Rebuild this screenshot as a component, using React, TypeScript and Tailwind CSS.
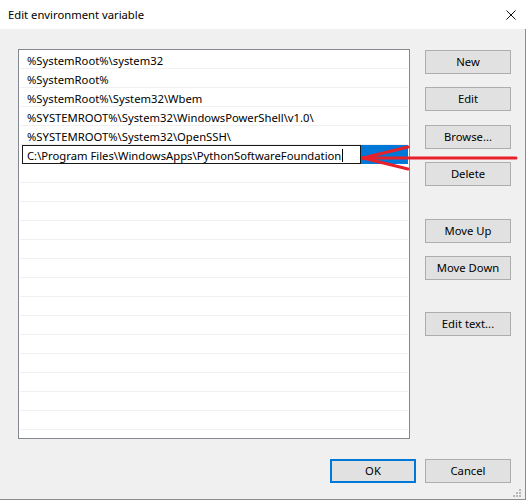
import React from "react";

const paths = [
  "%SystemRoot%\\system32",
  "%SystemRoot%",
  "%SystemRoot%\\System32\\Wbem",
  "%SYSTEMROOT%\\System32\\WindowsPowerShell\\v1.0\\",
  "%SYSTEMROOT%\\System32\\OpenSSH\\",
];

const editing = "C:\\Program Files\\WindowsApps\\PythonSoftwareFoundation";

const sideButtons = [
  { label: "New", mt: "mt-[1px]" },
  { label: "Edit", mt: "mt-[13px]" },
  { label: "Browse...", mt: "mt-[14px]" },
  { label: "Delete", mt: "mt-[13px]" },
  { label: "Move Up", mt: "mt-[33px]" },
  { label: "Move Down", mt: "mt-[13px]" },
  { label: "Edit text...", mt: "mt-[32px]" },
];

const Button: React.FC<{ label: string; className?: string }> = ({ label, className = "" }) => (
  <div
    className={`w-[86px] h-[24px] flex items-center justify-center bg-[#e1e1e1] border border-[#adadad] ${className}`}
  >
    {label}
  </div>
);

export default function App() {
  return (
    <div className="relative w-[526px] h-[500px] flex flex-col font-['Noto_Sans',sans-serif] text-[11.25px] text-black leading-none whitespace-nowrap">
      {/* title bar */}
      <div className="h-[29px] bg-white flex items-center justify-between pl-[8px] pr-[10px] shrink-0">
        <span>Edit environment variable</span>
        <svg width="10" height="10" viewBox="0 0 10 10">
          <path d="M0.5 0.5 L9.5 9.5 M9.5 0.5 L0.5 9.5" stroke="#111" strokeWidth="1" />
        </svg>
      </div>

      {/* body */}
      <div className="relative flex-1 flex flex-col bg-[#f0f0f0] border-r border-b border-[#8c8c8c] pl-[18px] pr-[14px] pt-[20px]">
        <div className="flex gap-[15px]">
          {/* list */}
          <div className="w-[392px] h-[390px] bg-white border border-[#828790] px-[1px] overflow-hidden">
            {paths.map((p) => (
              <div key={p} className="h-[19px] border-b border-[#f0f0f0] flex items-center pl-[7px] pt-[3px]">
                {p}
              </div>
            ))}
            <div className="h-[19px] flex">
              <div className="ml-[2px] w-[339px] h-[19px] border border-[#1a1a1a] flex items-center pl-[4px] pt-[2px]">
                <span>{editing}</span>
                <span className="ml-[1px] w-[1px] h-[13px] bg-black" />
              </div>
              <div className="flex-1 bg-[#0078d7]" />
            </div>
            {Array.from({ length: 15 }).map((_, i) => (
              <div key={i} className="h-[19px] border-b border-[#f0f0f0]" />
            ))}
          </div>

          {/* side buttons */}
          <div className="flex flex-col w-[86px]">
            {sideButtons.map((b) => (
              <Button key={b.label} label={b.label} className={b.mt} />
            ))}
          </div>
        </div>

        <div className="flex justify-end gap-[9px] mt-[20px]">
          <div className="w-[86px] h-[24px] flex items-center justify-center bg-[#e1e1e1] border-2 border-[#0078d7]">
            OK
          </div>
          <Button label="Cancel" />
        </div>

        {/* size grip */}
        <svg className="absolute right-[3px] bottom-[1px]" width="10" height="10" viewBox="0 0 10 10">
          <g fill="#b8b8b8">
            <rect x="7" y="1" width="2" height="2" />
            <rect x="4" y="4" width="2" height="2" />
            <rect x="7" y="4" width="2" height="2" />
            <rect x="1" y="7" width="2" height="2" />
            <rect x="4" y="7" width="2" height="2" />
            <rect x="7" y="7" width="2" height="2" />
          </g>
        </svg>
      </div>

      {/* red annotation arrow */}
      <svg className="absolute left-0 top-0 pointer-events-none" width="526" height="500">
        <g stroke="#e8202a" strokeWidth="3" strokeLinecap="round" fill="none">
          <line x1="363" y1="158" x2="516" y2="158" />
          <line x1="363" y1="158" x2="408" y2="147" />
          <line x1="363" y1="158" x2="408" y2="169" />
        </g>
      </svg>
    </div>
  );
}
